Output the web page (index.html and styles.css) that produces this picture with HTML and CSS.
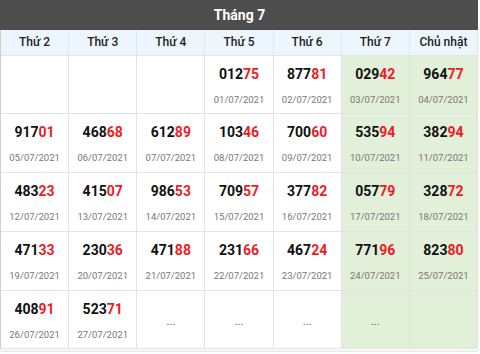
FILE: index.html
```html
<!DOCTYPE html>
<html lang="vi">
<head>
<meta charset="utf-8">
<link rel="stylesheet" href="styles.css">
</head>
<body>
<div class="cal">
  <div class="title">Tháng 7</div>
  <div class="grid">
    <div class="dn">Thứ 2</div><div class="dn">Thứ 3</div><div class="dn">Thứ 4</div><div class="dn">Thứ 5</div><div class="dn">Thứ 6</div><div class="dn">Thứ 7</div><div class="dn">Chủ nhật</div>

    <div class="c"></div><div class="c"></div><div class="c"></div>
    <div class="c"><b>012<i>75</i></b><span>01/07/2021</span></div>
    <div class="c"><b>877<i>81</i></b><span>02/07/2021</span></div>
    <div class="c we"><b>029<i>42</i></b><span>03/07/2021</span></div>
    <div class="c we"><b>964<i>77</i></b><span>04/07/2021</span></div>

    <div class="c"><b>917<i>01</i></b><span>05/07/2021</span></div>
    <div class="c"><b>468<i>68</i></b><span>06/07/2021</span></div>
    <div class="c"><b>612<i>89</i></b><span>07/07/2021</span></div>
    <div class="c"><b>103<i>46</i></b><span>08/07/2021</span></div>
    <div class="c"><b>700<i>60</i></b><span>09/07/2021</span></div>
    <div class="c we"><b>535<i>94</i></b><span>10/07/2021</span></div>
    <div class="c we"><b>382<i>94</i></b><span>11/07/2021</span></div>

    <div class="c"><b>483<i>23</i></b><span>12/07/2021</span></div>
    <div class="c"><b>415<i>07</i></b><span>13/07/2021</span></div>
    <div class="c"><b>986<i>53</i></b><span>14/07/2021</span></div>
    <div class="c"><b>709<i>57</i></b><span>15/07/2021</span></div>
    <div class="c"><b>377<i>82</i></b><span>16/07/2021</span></div>
    <div class="c we"><b>057<i>79</i></b><span>17/07/2021</span></div>
    <div class="c we"><b>328<i>72</i></b><span>18/07/2021</span></div>

    <div class="c"><b>471<i>33</i></b><span>19/07/2021</span></div>
    <div class="c"><b>230<i>36</i></b><span>20/07/2021</span></div>
    <div class="c"><b>471<i>88</i></b><span>21/07/2021</span></div>
    <div class="c"><b>231<i>66</i></b><span>22/07/2021</span></div>
    <div class="c"><b>467<i>24</i></b><span>23/07/2021</span></div>
    <div class="c we"><b>771<i>96</i></b><span>24/07/2021</span></div>
    <div class="c we"><b>823<i>80</i></b><span>25/07/2021</span></div>

    <div class="c"><b>408<i>91</i></b><span>26/07/2021</span></div>
    <div class="c"><b>523<i>71</i></b><span>27/07/2021</span></div>
    <div class="c dots">...</div>
    <div class="c dots">...</div>
    <div class="c dots">...</div>
    <div class="c dots we">...</div>
    <div class="c we"></div>
  </div>
</div>
<div class="foot"></div>
</body>
</html>
```

FILE: styles.css
```css
html, body {
  margin: 0;
  padding: 0;
  background: #fff;
}
body {
  font-family: Roboto, "Liberation Sans", Arial, sans-serif;
  color: #222;
}
.cal {
  width: 477px;
  border-left: 1px solid #cfcfcf;
}
.title {
  height: 30px;
  background: #4e4e4e;
  color: #fff;
  font-weight: 700;
  font-size: 14px;
  line-height: 30px;
  text-align: center;
  margin-left: -1px;
  padding-left: 1px;
}
.grid {
  display: grid;
  grid-template-columns: repeat(7, 1fr);
  grid-template-rows: 26px 58px 59px 59px 59px 58px;
}
.dn {
  background: #eef6fd;
  border-right: 1px solid #dfe6ec;
  border-bottom: 1px solid #e2e6ea;
  font-size: 12px;
  font-weight: 500;
  color: #222;
  text-align: center;
  line-height: 25px;
}
.c {
  border-right: 1px solid #e3e3e3;
  border-bottom: 1px solid #e3e3e3;
  display: flex;
  flex-direction: column;
  align-items: center;
  padding-top: 8px;
  box-sizing: border-box;
}
.c b {
  font-size: 14px;
  font-weight: 700;
  line-height: 20px;
  color: #111;
}
.c i {
  font-style: normal;
  color: #ed1c24;
}
.c span {
  margin-top: 9px;
  font-size: 9.5px;
  line-height: 14px;
  color: #777;
}
.we {
  background: #e2efd9;
  border-right-color: #dbe5d4;
}
.dots {
  justify-content: center;
  padding-top: 4px;
  font-size: 11px;
  color: #555;
}
.foot {
  width: 478px;
  height: 2px;
  margin-top: 1px;
  background: #eee;
}
```
